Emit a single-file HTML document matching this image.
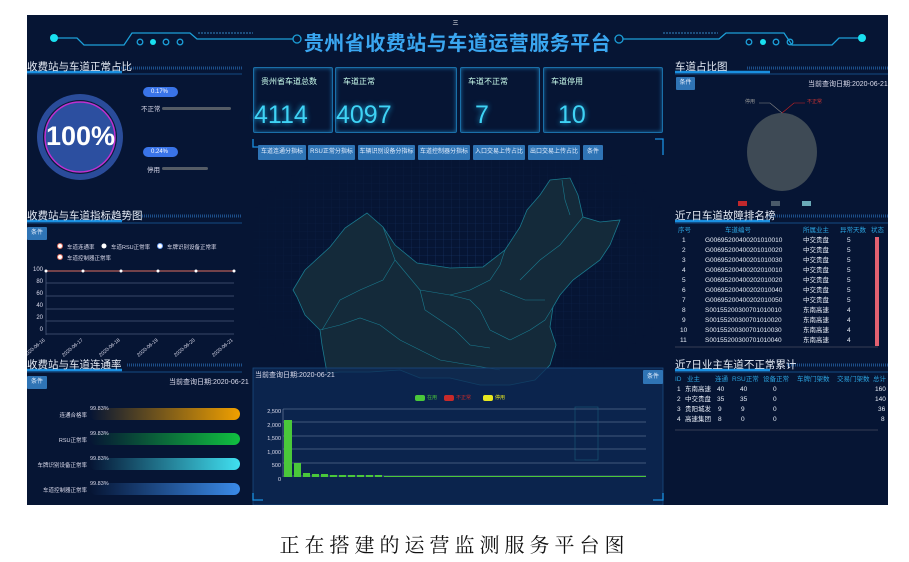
<!DOCTYPE html>
<html><head><meta charset="utf-8"><style>
*{margin:0;padding:0;box-sizing:border-box}
body{width:909px;height:562px;background:#fff;position:relative;overflow:hidden;font-family:"Liberation Sans","Noto Sans CJK SC",sans-serif}
#d{position:absolute;left:27px;top:15px;width:861px;height:490px;background:#061534;overflow:hidden}
.a{position:absolute;white-space:nowrap}
.h{font-size:10.5px;color:#e8eef8}
.btn{position:absolute;background:#2f74b5;color:#e6f0ff;font-size:6px;text-align:center;line-height:15px;height:15px;border-radius:1px}
.s{font-size:6.5px;color:#dde}
.card{position:absolute;top:52px;height:66px;border:1.5px solid #1a6fa8;border-radius:2px;box-shadow:0 0 4px #1a6fa8 inset}
.card .t{position:absolute;left:7px;top:8px;font-size:8px;color:#cfe}
.card .n{position:absolute;left:0;top:33px;font-size:25px;color:#3fd3f5;text-shadow:0 0 6px #1aa8e0}
.tb{position:absolute;font-size:7px;color:#e8eef8}
.tb div{height:10px;line-height:10px;position:relative}
.tb span{position:absolute}
.hd{color:#2ba4e0}
.bar{position:absolute;left:63px;width:150px;height:12px;border-radius:6px}
</style></head><body>
<div id="d">
<svg class="a" style="left:0;top:0" width="861" height="490">
<defs>
<pattern id="g" width="8" height="8" patternUnits="userSpaceOnUse"><path d="M8 0H0V8" fill="none" stroke="#1b3a6e" stroke-width="0.6"/></pattern>
<radialGradient id="rg" cx="0.5" cy="0.45" r="0.55"><stop offset="0" stop-color="#fff" stop-opacity="1"/><stop offset="1" stop-color="#fff" stop-opacity="0"/></radialGradient>
<mask id="m"><rect x="226" y="140" width="410" height="240" fill="url(#rg)"/></mask>
</defs>
<rect x="226" y="140" width="410" height="240" fill="url(#g)" mask="url(#m)"/>
<g stroke="#1c9fd8" stroke-width="1.3" fill="none">
<path d="M27 23H50L57 30H97L105 18H163L170 24H266"/>
<circle cx="270" cy="24" r="4"/>
<circle cx="113" cy="27" r="2.8"/><circle cx="139" cy="27" r="2.8"/><circle cx="153" cy="27" r="2.8"/>
<path d="M171 18H226" stroke-dasharray="2 1" stroke="#2a6fa8"/>
<path d="M835 23H812L805 30H765L757 18H699L692 24H596"/>
<circle cx="592" cy="24" r="4"/>
<circle cx="722" cy="27" r="2.8"/><circle cx="749" cy="27" r="2.8"/><circle cx="763" cy="27" r="2.8"/>
<path d="M636 18H691" stroke-dasharray="2 1" stroke="#2a6fa8"/>
</g>
<circle cx="27" cy="23" r="4" fill="#19e0f0"/><circle cx="126" cy="27" r="3" fill="#19e0f0"/>
<circle cx="835" cy="23" r="4" fill="#19e0f0"/><circle cx="736" cy="27" r="3" fill="#19e0f0"/>
<g>
<path d="M0 57H95" stroke="#1a8fe0" stroke-width="2.5"/><path d="M0 59H215" stroke="#1a5fa0" stroke-width="0.8"/><path d="M90 53H215" stroke="#1d4f8a" stroke-width="3" stroke-dasharray="1 1"/>
<path d="M0 206H95" stroke="#1a8fe0" stroke-width="2.5"/><path d="M0 208H215" stroke="#1a5fa0" stroke-width="0.8"/><path d="M115 201H215" stroke="#1d4f8a" stroke-width="3" stroke-dasharray="1 1"/>
<path d="M0 355H95" stroke="#1a8fe0" stroke-width="2.5"/><path d="M0 357H215" stroke="#1a5fa0" stroke-width="0.8"/><path d="M100 350H215" stroke="#1d4f8a" stroke-width="3" stroke-dasharray="1 1"/>
<path d="M648 57H743" stroke="#1a8fe0" stroke-width="2.5"/><path d="M648 59H861" stroke="#1a5fa0" stroke-width="0.8"/><path d="M720 53H861" stroke="#1d4f8a" stroke-width="3" stroke-dasharray="1 1"/>
<path d="M648 206H743" stroke="#1a8fe0" stroke-width="2.5"/><path d="M648 208H861" stroke="#1a5fa0" stroke-width="0.8"/><path d="M740 201H861" stroke="#1d4f8a" stroke-width="3" stroke-dasharray="1 1"/>
<path d="M648 355H743" stroke="#1a8fe0" stroke-width="2.5"/><path d="M648 357H861" stroke="#1a5fa0" stroke-width="0.8"/><path d="M760 350H861" stroke="#1d4f8a" stroke-width="3" stroke-dasharray="1 1"/>
</g>
<circle cx="53" cy="122" r="43" fill="#2a4c9a"/>
<circle cx="53" cy="122" r="37" fill="#0a1a3a"/>
<circle cx="53" cy="122" r="35" fill="#2c4fa0" stroke="#c030d0" stroke-width="1.5"/>
<rect x="135" y="92" width="69" height="3" rx="1.5" fill="#555c66"/>
<rect x="135" y="152" width="46" height="3" rx="1.5" fill="#555c66"/>
<path d="M121 72h25a4 4 0 0 1 0 10h-25a4 4 0 0 1 0-10z" fill="#3a74e8"/>
<path d="M121 132h25a4 4 0 0 1 0 10h-25a4 4 0 0 1 0-10z" fill="#3a74e8"/>
<path d="M226 124V132H234" stroke="#1a8fe0" fill="none" stroke-width="1.3"/>
<path d="M628 124H636V140" stroke="#1a8fe0" fill="none" stroke-width="1.3"/>
<g transform="translate(-27,-15)">
<path d="M293 290L305 270L330 247L345 228L367 213L383 227L395 245L417 263L450 268L483 267L505 250L520 227L527 210L540 195L550 180L570 178L578 195L583 217L600 222L620 220L610 245L600 260L573 280L560 295L553 307L550 327L556 345L550 365L535 380L510 385L480 385L450 378L420 378L400 370L370 372L340 372L327 373L322 345L320 330L305 315L297 297Z" fill="#142a3a" stroke="#1a7a8e" stroke-width="0.8"/>
<g fill="none" stroke="#1a7a8e" stroke-width="0.6">
<path d="M383 227L395 260L383 280L360 290L340 300L322 330"/><path d="M395 260L420 290L450 295L470 290"/><path d="M320 330L340 325L360 318L380 325L400 340"/>
<path d="M420 290L425 310L440 320L455 330"/><path d="M450 295L470 300L480 310L490 330L510 340"/><path d="M470 290L490 280L500 265L505 250"/>
<path d="M400 340L420 350L440 360L470 365L500 370"/><path d="M510 340L530 330L545 320L553 307"/><path d="M520 280L540 260L560 245L583 217"/>
<path d="M562 180L565 200L570 215"/><path d="M455 330L470 345L490 348"/><path d="M500 290L525 300L545 300"/>
</g>
</g>
<ellipse cx="755" cy="137" rx="35" ry="39" fill="#3e4a55"/>
<path d="M755 98L743 88H732" stroke="#888" fill="none" stroke-width="0.6"/>
<path d="M755 98L767 88H778" stroke="#c22" fill="none" stroke-width="0.6"/>
<rect x="711" y="186" width="9" height="5" fill="#c0282c"/><rect x="744" y="186" width="9" height="5" fill="#4a5a6a"/><rect x="775" y="186" width="9" height="5" fill="#6aaab8"/>
<g stroke="#4a5a7a" stroke-width="0.8">
<path d="M19 319H207M19 306H207M19 294H207M19 281H207M19 268H207M19 256V320"/>
</g>
<path d="M19 256H207" stroke="#e07060" stroke-width="1"/>
<g fill="#fff"><circle cx="19" cy="256" r="1.5"/><circle cx="56" cy="256" r="1.5"/><circle cx="94" cy="256" r="1.5"/><circle cx="131" cy="256" r="1.5"/><circle cx="169" cy="256" r="1.5"/><circle cx="207" cy="256" r="1.5"/></g>
<g fill="#fff" stroke="#e07060" stroke-width="1"><circle cx="33" cy="231" r="2.5"/><circle cx="33" cy="242" r="2.5"/></g>
<circle cx="77" cy="231" r="2.5" fill="#fff"/><circle cx="133" cy="231" r="2.5" fill="#fff" stroke="#7af" stroke-width="1"/>
<rect x="226" y="353" width="410" height="137" fill="#0d2a56" fill-opacity="0.75" stroke="#1a4a80" stroke-width="0.8"/>
<path d="M226 478V485H236M636 478V485H626" stroke="#1a8fe0" fill="none" stroke-width="1.3"/>
<rect x="388" y="380" width="10" height="6" rx="2" fill="#4ac83a"/><rect x="417" y="380" width="10" height="6" rx="2" fill="#c82a2a"/><rect x="456" y="380" width="10" height="6" rx="2" fill="#e8e820"/>
<g stroke="#7a8aa8" stroke-width="0.6"><path d="M256 394H619M256 407H619M256 421H619M256 434H619M256 448H619M256 461H619M256 394V462"/></g>
<rect x="257" y="405" width="8" height="57" fill="#4ac83a"/><rect x="267" y="448" width="7" height="14" fill="#4ac83a"/>
<g fill="#4ac83a"><rect x="276" y="458" width="7" height="4"/><rect x="285" y="459" width="7" height="3"/><rect x="294" y="459" width="7" height="3"/><rect x="303" y="460" width="7" height="2"/><rect x="312" y="460" width="7" height="2"/><rect x="321" y="460" width="7" height="2"/><rect x="330" y="460" width="7" height="2"/><rect x="339" y="460" width="7" height="2"/><rect x="348" y="460" width="7" height="2"/><rect x="357" y="461" width="262" height="1"/></g>
<rect x="548" y="392" width="23" height="53" fill="none" stroke="#1a5a7a" stroke-width="0.6"/>
<rect x="848" y="222" width="4" height="109" fill="#e26070"/>
<path d="M648 332H851M648 415H851" stroke="#667" stroke-width="0.6"/>
</svg>
<div class="a" style="left:-2px;top:3px;width:861px;text-align:center;font-size:6px;color:#fff">三</div>
<div class="a" style="left:0;top:12px;width:861px;text-align:center;font-size:20px;font-weight:bold;color:#3aa6f0;letter-spacing:0.5px">贵州省收费站与车道运营服务平台</div>
<div class="a h" style="left:0;top:44px">收费站与车道正常占比</div>
<div class="a" style="left:19px;top:106px;font-size:27px;font-weight:bold;color:#fff">100%</div>
<div class="a s" style="left:124px;top:74px;color:#fff;font-size:6px">0.17%</div>
<div class="a s" style="left:114px;top:88px">不正常</div>
<div class="a s" style="left:124px;top:134px;color:#fff;font-size:6px">0.24%</div>
<div class="a s" style="left:120px;top:149px">停用</div>

<div class="card" style="left:226px;width:80px"><div class="t">贵州省车道总数</div><div class="n">4114</div></div>
<div class="card" style="left:308px;width:122px"><div class="t">车道正常</div><div class="n">4097</div></div>
<div class="card" style="left:433px;width:80px"><div class="t">车道不正常</div><div class="n" style="left:14px">7</div></div>
<div class="card" style="left:516px;width:120px"><div class="t">车道停用</div><div class="n" style="left:14px">10</div></div>

<div class="btn" style="left:231px;top:130px;width:48px">车道连通分指标</div>
<div class="btn" style="left:281px;top:130px;width:47px">RSU正常分指标</div>
<div class="btn" style="left:331px;top:130px;width:57px">车辆识别设备分指标</div>
<div class="btn" style="left:391px;top:130px;width:52px">车道控制器分指标</div>
<div class="btn" style="left:446px;top:130px;width:52px">入口交易上传占比</div>
<div class="btn" style="left:501px;top:130px;width:52px">出口交易上传占比</div>
<div class="btn" style="left:556px;top:130px;width:20px">条件</div>

<div class="a h" style="left:648px;top:44px">车道占比图</div>
<div class="btn" style="left:649px;top:62px;width:19px;height:13px;line-height:13px">条件</div>
<div class="a s" style="left:781px;top:64px;font-size:7px">当前查询日期:2020-06-21</div>
<div class="a" style="left:718px;top:83px;font-size:5px;color:#999">停用</div>
<div class="a" style="left:780px;top:83px;font-size:5px;color:#c33">不正常</div>

<div class="a h" style="left:0;top:193px">收费站与车道指标趋势图</div>
<div class="btn" style="left:0;top:212px;width:20px;height:13px;line-height:13px">条件</div>
<div class="a s" style="left:40px;top:228px;font-size:5.5px">车道连通率</div>
<div class="a s" style="left:84px;top:228px;font-size:5.5px">车道RSU正常率</div>
<div class="a s" style="left:140px;top:228px;font-size:5.5px">车牌识别设备正常率</div>
<div class="a s" style="left:40px;top:239px;font-size:5.5px">车道控制器正常率</div>
<div class="a s" style="left:0;top:252px;width:16px;text-align:right;font-size:6px;line-height:6px">100<br><br>80<br><br>60<br><br>40<br><br>20<br><br>0</div>
<div class="a s" style="left:-5px;top:330px;font-size:5px;transform:rotate(-40deg)">2020-06-16</div>
<div class="a s" style="left:33px;top:330px;font-size:5px;transform:rotate(-40deg)">2020-06-17</div>
<div class="a s" style="left:70px;top:330px;font-size:5px;transform:rotate(-40deg)">2020-06-18</div>
<div class="a s" style="left:108px;top:330px;font-size:5px;transform:rotate(-40deg)">2020-06-19</div>
<div class="a s" style="left:145px;top:330px;font-size:5px;transform:rotate(-40deg)">2020-06-20</div>
<div class="a s" style="left:183px;top:330px;font-size:5px;transform:rotate(-40deg)">2020-06-21</div>

<div class="a h" style="left:0;top:342px">收费站与车道连通率</div>
<div class="btn" style="left:0;top:361px;width:20px;height:13px;line-height:13px">条件</div>
<div class="a s" style="left:142px;top:362px;font-size:7px">当前查询日期:2020-06-21</div>
<div class="bar" style="top:393px;background:linear-gradient(90deg,#061534,#f0a000)"></div>
<div class="bar" style="top:418px;background:linear-gradient(90deg,#061534,#10c040)"></div>
<div class="bar" style="top:443px;background:linear-gradient(90deg,#061534,#40e0f0)"></div>
<div class="bar" style="top:468px;background:linear-gradient(90deg,#061534,#3a8ae8)"></div>
<div class="a s" style="right:801px;top:396px;font-size:5.5px">连通合格率</div>
<div class="a s" style="right:801px;top:421px;font-size:5.5px">RSU正常率</div>
<div class="a s" style="right:801px;top:446px;font-size:5.5px">车牌识别设备正常率</div>
<div class="a s" style="right:801px;top:471px;font-size:5.5px">车道控制器正常率</div>
<div class="a s" style="left:63px;top:391px;font-size:5.5px">99.83%</div>
<div class="a s" style="left:63px;top:416px;font-size:5.5px">99.83%</div>
<div class="a s" style="left:63px;top:441px;font-size:5.5px">99.83%</div>
<div class="a s" style="left:63px;top:466px;font-size:5.5px">99.83%</div>

<div class="a s" style="left:228px;top:355px;font-size:7px">当前查询日期:2020-06-21</div>
<div class="btn" style="left:616px;top:355px;width:20px;height:14px;line-height:14px">条件</div>
<div class="a" style="left:400px;top:379px;font-size:5px;color:#4ac83a">在用</div>
<div class="a" style="left:429px;top:379px;font-size:5px;color:#c82a2a">不正常</div>
<div class="a" style="left:468px;top:379px;font-size:5px;color:#e8e820">停用</div>
<div class="a s" style="left:226px;top:391px;width:28px;text-align:right;font-size:5.5px;line-height:13.5px">2,500<br>2,000<br>1,500<br>1,000<br>500<br>0</div>

<div class="a h" style="left:648px;top:193px">近7日车道故障排名榜</div>
<div class="tb" style="left:648px;top:211px;width:213px;font-size:6.5px">
<div class="hd"><span style="left:3px">序号</span><span style="left:50px">车道编号</span><span style="left:128px">所属业主</span><span style="left:165px">异常天数</span><span style="left:196px">状态</span></div>
<div><span style="left:7px">1</span><span style="left:30px">G00695200400201010010</span><span style="left:128px">中交贵盘</span><span style="left:172px">5</span></div>
<div><span style="left:7px">2</span><span style="left:30px">G00695200400201010020</span><span style="left:128px">中交贵盘</span><span style="left:172px">5</span></div>
<div><span style="left:7px">3</span><span style="left:30px">G00695200400201010030</span><span style="left:128px">中交贵盘</span><span style="left:172px">5</span></div>
<div><span style="left:7px">4</span><span style="left:30px">G00695200400202010010</span><span style="left:128px">中交贵盘</span><span style="left:172px">5</span></div>
<div><span style="left:7px">5</span><span style="left:30px">G00695200400202010020</span><span style="left:128px">中交贵盘</span><span style="left:172px">5</span></div>
<div><span style="left:7px">6</span><span style="left:30px">G00695200400202010040</span><span style="left:128px">中交贵盘</span><span style="left:172px">5</span></div>
<div><span style="left:7px">7</span><span style="left:30px">G00695200400202010050</span><span style="left:128px">中交贵盘</span><span style="left:172px">5</span></div>
<div><span style="left:7px">8</span><span style="left:30px">S00155200300701010010</span><span style="left:128px">东南高速</span><span style="left:172px">4</span></div>
<div><span style="left:7px">9</span><span style="left:30px">S00155200300701010020</span><span style="left:128px">东南高速</span><span style="left:172px">4</span></div>
<div><span style="left:5px">10</span><span style="left:30px">S00155200300701010030</span><span style="left:128px">东南高速</span><span style="left:172px">4</span></div>
<div><span style="left:5px">11</span><span style="left:30px">S00155200300701010040</span><span style="left:128px">东南高速</span><span style="left:172px">4</span></div>
</div>

<div class="a h" style="left:648px;top:342px">近7日业主车道不正常累计</div>
<div class="tb" style="left:648px;top:360px;width:213px;font-size:6.5px">
<div class="hd"><span style="left:0">ID</span><span style="left:12px">业主</span><span style="left:40px">连通</span><span style="left:57px">RSU正常</span><span style="left:88px">设备正常</span><span style="left:122px">车牌门架数</span><span style="left:162px">交易门架数</span><span style="left:198px">总计</span></div>
<div><span style="left:2px">1</span><span style="left:10px">东南高速</span><span style="left:42px">40</span><span style="left:65px">40</span><span style="left:98px">0</span><span style="left:200px">160</span></div>
<div><span style="left:2px">2</span><span style="left:10px">中交贵盘</span><span style="left:42px">35</span><span style="left:65px">35</span><span style="left:98px">0</span><span style="left:200px">140</span></div>
<div><span style="left:2px">3</span><span style="left:10px">贵阳城发</span><span style="left:43px">9</span><span style="left:66px">9</span><span style="left:98px">0</span><span style="left:203px">36</span></div>
<div><span style="left:2px">4</span><span style="left:10px">高速集团</span><span style="left:43px">8</span><span style="left:66px">0</span><span style="left:98px">0</span><span style="left:206px">8</span></div>
</div>
</div>
<div class="a" style="left:0;top:529px;width:909px;text-align:center;font-family:'Liberation Serif','Noto Serif CJK SC',serif;font-size:20px;letter-spacing:5px;color:#111">正在搭建的运营监测服务平台图</div>
</body></html>
